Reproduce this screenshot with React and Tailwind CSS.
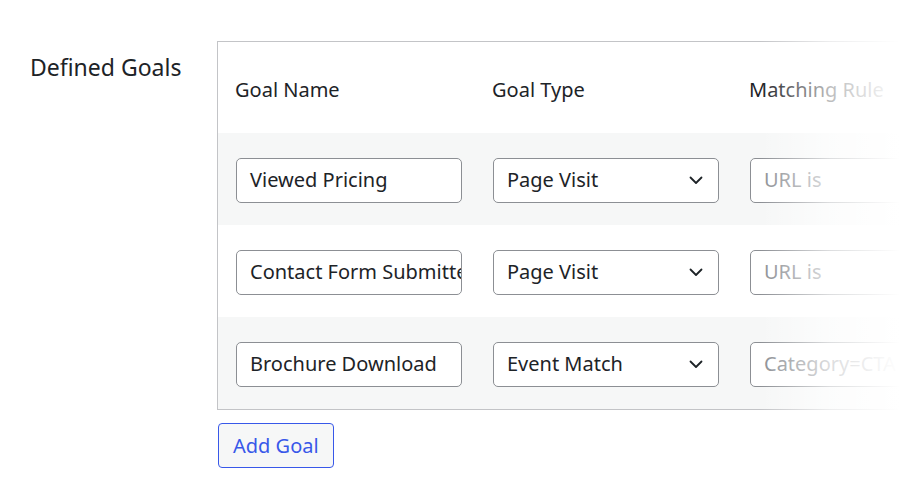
import React from 'react';

const goals = [
  { name: 'Viewed Pricing', type: 'Page Visit', rule: 'URL is' },
  { name: 'Contact Form Submitted', type: 'Page Visit', rule: 'URL is' },
  { name: 'Brochure Download', type: 'Event Match', rule: 'Category=CTA' },
];

function Chevron() {
  return (
    <svg width="16" height="16" viewBox="0 0 16 16" fill="none" className="shrink-0">
      <path d="M2.5 5.5 8 11l5.5-5.5" stroke="#1d2327" strokeWidth="1.8" strokeLinecap="round" strokeLinejoin="round" />
    </svg>
  );
}

export default function App() {
  return (
    <div className="relative w-[900px] h-[494px] overflow-hidden bg-white text-[#1d2327]" style={{ fontFamily: '"Noto Sans", sans-serif' }}>
      <div className="flex pt-[41px]">
        {/* field label */}
        <div className="w-[217px] shrink-0 pl-[30px] pt-[11px] text-[23px] leading-[30px]">Defined Goals</div>

        <div className="shrink-0">
          <div className="w-[800px] border border-[#c3c4c7]">
            <div className="flex h-[91px] items-center pt-[4px] text-[20px]">
              <div className="w-[257px] pl-[17px]">Goal Name</div>
              <div className="w-[257px] pl-[17px]">Goal Type</div>
              <div className="w-[257px] pl-[17px]">Matching Rule</div>
            </div>
            {goals.map((g, i) => (
              <div key={g.name} className={`flex h-[92px] items-center pt-[2px] ${i % 2 === 0 ? 'bg-[#f6f7f7]' : 'bg-white'}`}>
                <div className="w-[257px] pl-[18px]">
                  <div className="w-[226px] h-[45px] flex items-center px-[13px] border border-[#8c8f94] rounded-[5px] bg-white text-[20px] whitespace-nowrap overflow-hidden">
                    {g.name}
                  </div>
                </div>
                <div className="w-[257px] pl-[18px]">
                  <div className="w-[226px] h-[45px] flex items-center justify-between pl-[13px] pr-[14px] border border-[#8c8f94] rounded-[5px] bg-white text-[20px]">
                    <span>{g.type}</span>
                    <Chevron />
                  </div>
                </div>
                <div className="w-[257px] pl-[18px]">
                  <div className="w-[226px] h-[45px] flex items-center px-[13px] border border-[#8c8f94] rounded-[5px] bg-white text-[20px] text-[#8c8f94] whitespace-nowrap overflow-hidden">
                    {g.rule}
                  </div>
                </div>
              </div>
            ))}
          </div>
          <button className="mt-[13px] ml-px h-[45px] px-[14px] border border-[#3858e9] rounded-[4px] text-[#3858e9] text-[20px] bg-[#f6f7f7]">
            Add Goal
          </button>
        </div>
      </div>

      {/* right edge fade */}
      <div className="pointer-events-none absolute top-0 right-0 h-full w-[140px] bg-gradient-to-r from-white/0 via-white/70 to-white" />
    </div>
  );
}
